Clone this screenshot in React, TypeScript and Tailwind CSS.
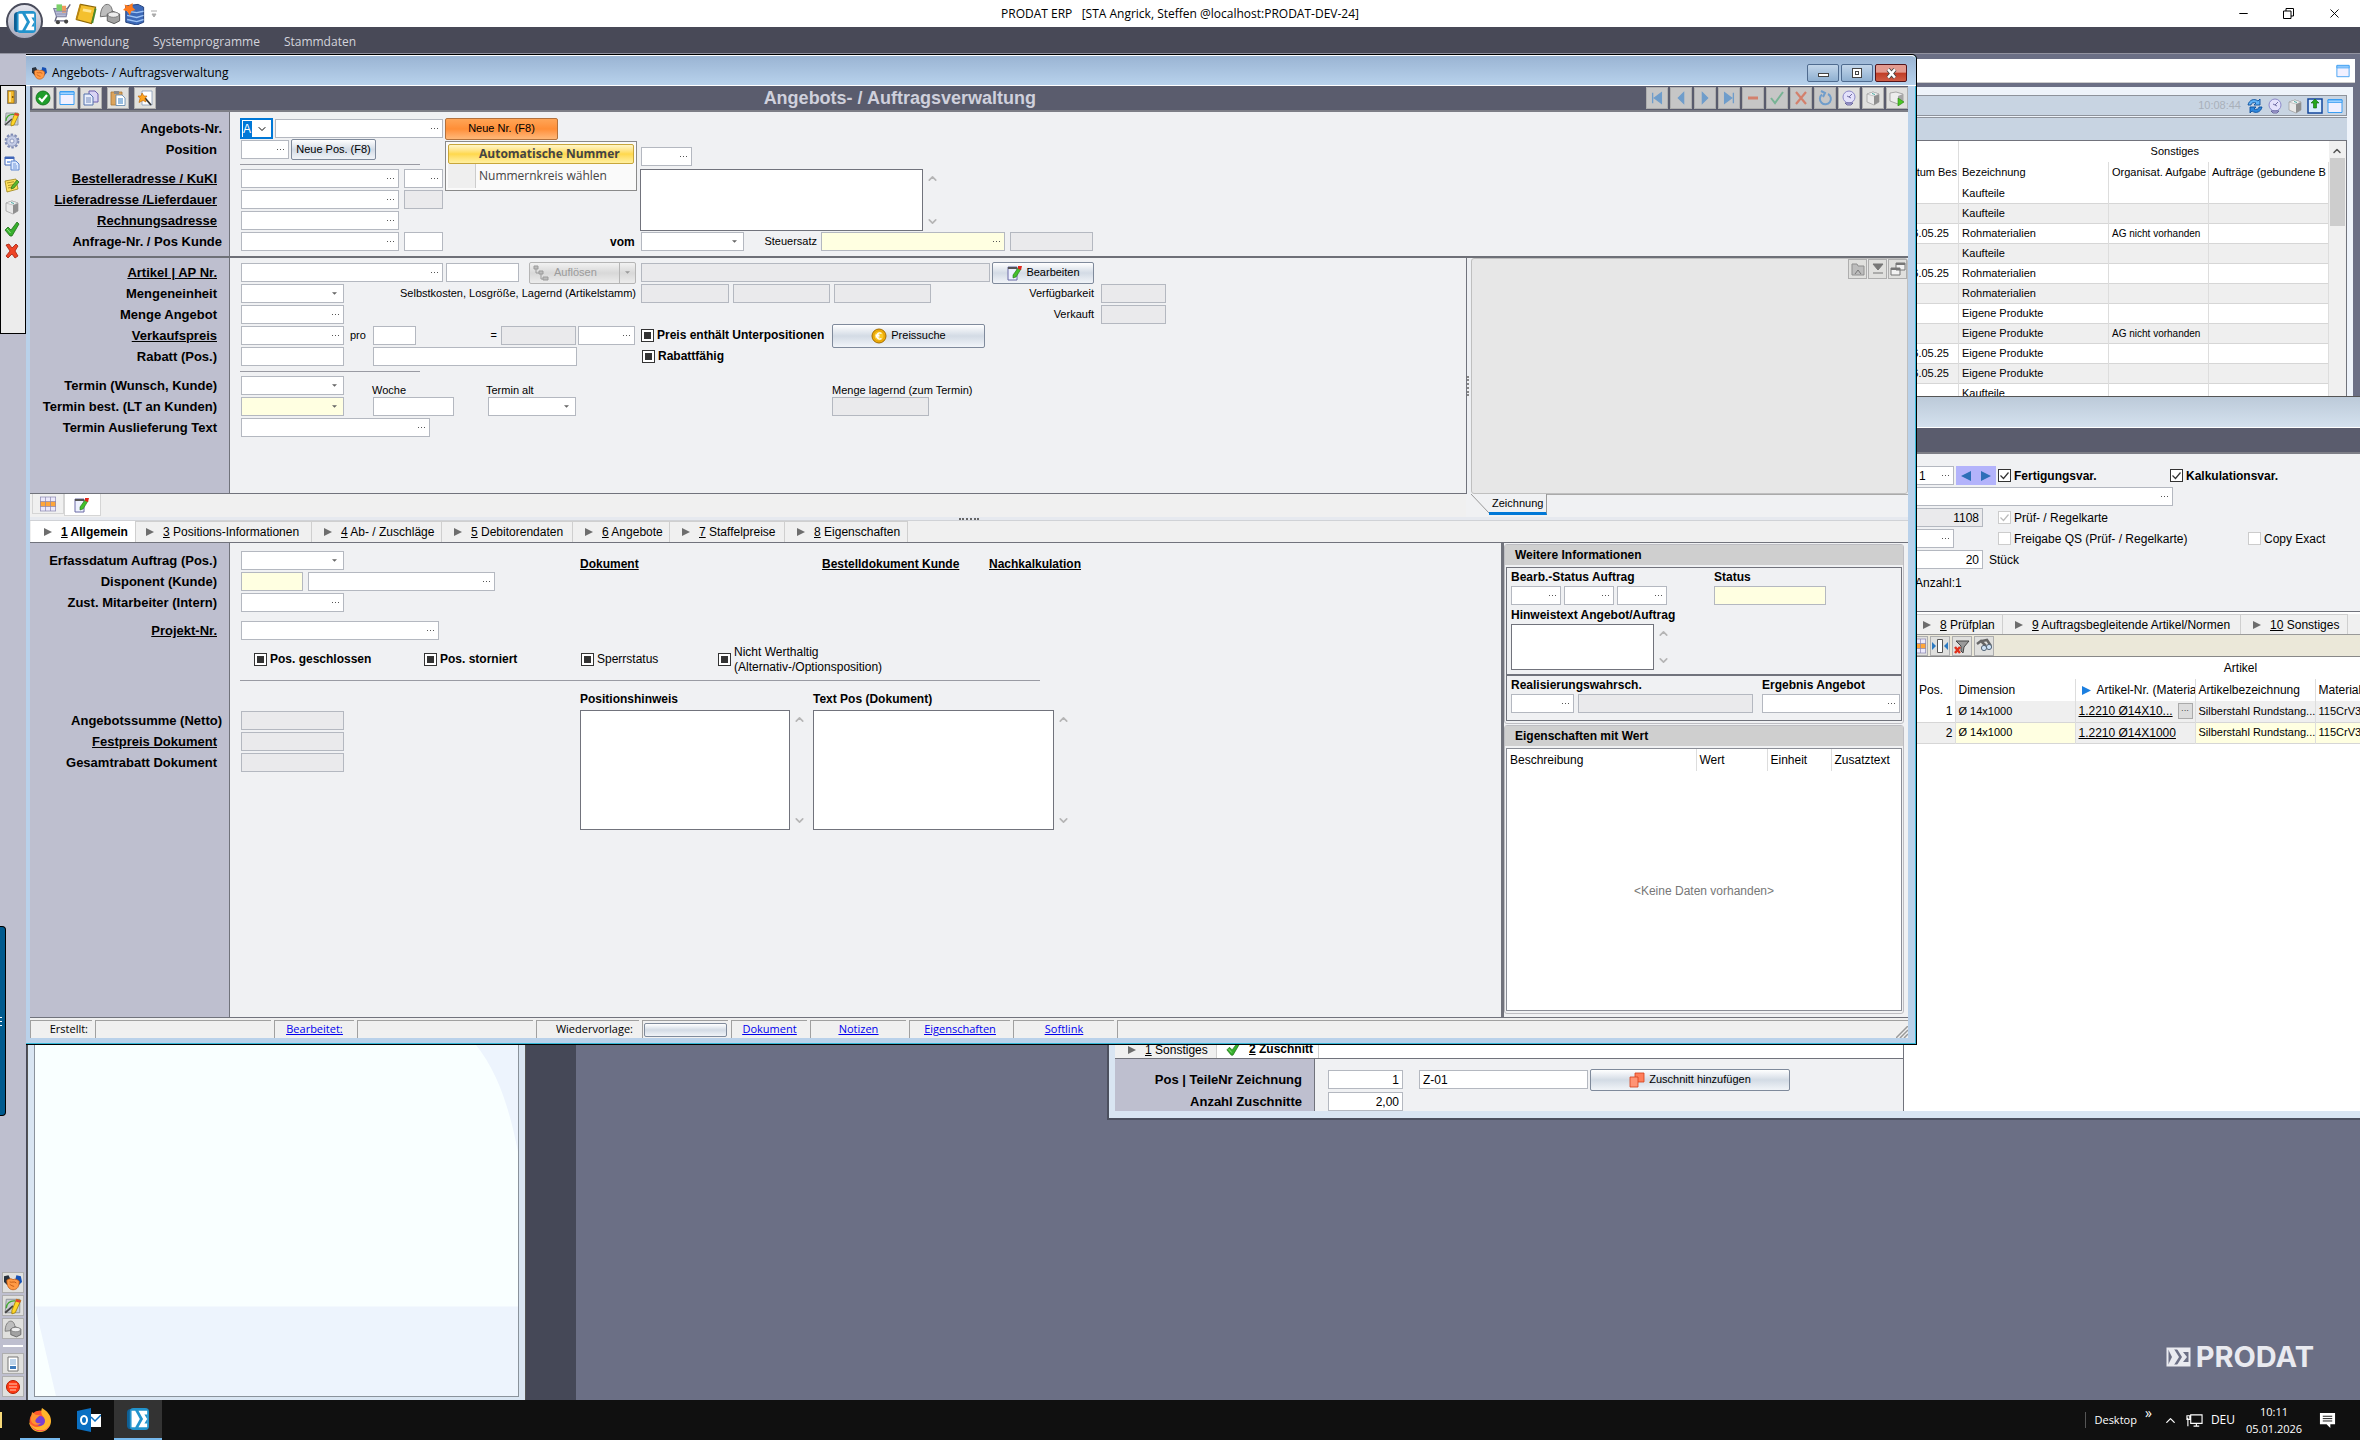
import React from 'react';
import clsx from 'clsx';
import { ChevronDown, ChevronUp, Minus, X } from 'lucide-react';

type Kids = { children?: React.ReactNode; className?: string };

/* ---------- icons ---------- */

const Svg: React.FC<Kids & { box?: string }> = ({ children, className = 'size-4', box = '0 0 16 16' }) => (
  <svg viewBox={box} className={clsx('shrink-0', className)} fill="none" aria-hidden="true">
    {children}
  </svg>
);

const DoorIcon = () => (
  <Svg>
    <path d="M3 1h9l1 1v12l-1 1H3z" fill="#8d8d8d" />
    <path d="M4 2h6v12H4z" fill="#f2b92c" stroke="#a87407" strokeWidth=".7" />
    <path d="M5 3h2v10H5z" fill="#ffe08a" />
    <circle cx="8.7" cy="8" r=".9" fill="#7c5200" />
  </Svg>
);

const DraftIcon = ({ className }: { className?: string }) => (
  <Svg className={className}>
    <path d="M2 2h12v12H1z" fill="#c9cdd0" stroke="#8a8f94" strokeWidth=".8" />
    <path d="M2 10C2 6 5 3 10 3.500" stroke="#43a832" strokeWidth="1.2" />
    <path d="M1 14l7-6" stroke="#444" strokeWidth="1.600" />
    <path d="M11 2l4 1-5 11-3 1 0-3z" fill="#ffd629" stroke="#9a7a00" strokeWidth=".7" />
    <path d="M11 2l4 1-.9 2-3.900-1z" fill="#e04431" />
  </Svg>
);

const GearIcon = () => (
  <Svg>
    <circle cx="8" cy="8" r="6.4" stroke="#7f8bb5" strokeWidth="2" strokeDasharray="2.5 1.5" />
    <circle cx="8" cy="8" r="5.3" fill="#c5cde6" stroke="#7f8bb5" strokeWidth=".8" />
    <circle cx="8" cy="8" r="2" fill="#f2f3f8" stroke="#7f8bb5" strokeWidth=".8" />
  </Svg>
);

const FormsIcon = () => (
  <Svg>
    <path d="M1 2h9v8H1z" fill="#fff" stroke="#4066b8" />
    <path d="M1 2h9v2H1z" fill="#4066b8" />
    <path d="M3 6h3v2H3z" fill="#8fb0ea" />
    <path d="M7 6h5l3 3v6H7z" fill="#dbe9ff" stroke="#5b84cf" />
    <path d="M9 9h3M9 11h4M9 13h4" stroke="#5b84cf" strokeWidth=".8" />
  </Svg>
);

const NoteIcon = () => (
  <Svg>
    <path d="M1 4l11-2 2 10-11 3z" fill="#ffe05b" stroke="#9b8317" strokeWidth=".8" />
    <path d="M3 6l7-1.3M4 8.500l6-1M4 11l4-1" stroke="#9b8317" strokeWidth=".8" />
    <path d="M13 3l2 2-5 6-3 1 1-3z" fill="#59b82f" stroke="#2f6b14" strokeWidth=".7" />
  </Svg>
);

const BoxIcon = ({ className }: { className?: string }) => (
  <Svg className={className}>
    <path d="M2 4l6-2 6 2v8l-5 3-7-3z" fill="#e9e9e9" stroke="#9a9a9a" strokeWidth=".7" />
    <path d="M9 6l5-2v8l-5 3z" fill="#8f8f8f" />
    <path d="M2 4l7 2 5-2-6-2z" fill="#f8f8f8" stroke="#a5a5a5" strokeWidth=".6" />
    <path d="M7 3.500l3 1" stroke="#45a7a0" />
  </Svg>
);

const TickIcon = ({ className }: { className?: string }) => (
  <Svg className={className}>
    <path d="M1 9l3-3 3 3 6-8 2 2-7 12H6z" fill="#36b02c" stroke="#226d1b" strokeWidth=".8" />
    <path d="M3 8l3.500 4" stroke="#9be08c" />
  </Svg>
);

const CrossIcon = () => (
  <Svg>
    <path d="M2 2l3-1 3 4 4-4 2 2-3 5 3 5-3 2-3-4-4 4-2-2 4-5z" fill="#ee4426" stroke="#a3200c" strokeWidth=".8" />
  </Svg>
);

const HandshakeIcon = ({ className }: { className?: string }) => (
  <Svg className={className}>
    <path d="M0 2l4-1 2 4-3 5-3-3z" fill="#27313d" />
    <path d="M11 1l4 1 1 5-3 3-3-5z" fill="#1550b5" />
    <path d="M2.500 5.500c2-1.500 4.500-1.500 5.500-.5 2-1 4 0 5.500 1.500C13.500 11 12 14 8 14S2.500 10 2.500 5.500z" fill="#ff9a45" stroke="#c35a10" strokeWidth=".7" />
    <path d="M5 7c2 1 4-1 6 1M5 9c1 1 3 2 4 2" stroke="#b64d0a" strokeWidth=".7" />
  </Svg>
);

const SolidsIcon = ({ className }: { className?: string }) => (
  <Svg className={className}>
    <path d="M1 10C1 5 3 1 6 1s4 4 4 8z" fill="#bdbdbd" stroke="#6e6e6e" strokeWidth=".7" />
    <path d="M6 8l4-2 5 2v5l-4 2-5-2z" fill="#a2a2a2" stroke="#5d5d5d" strokeWidth=".7" />
    <ellipse cx="10.500" cy="8.500" rx="4" ry="1.900" fill="#eee" stroke="#777" strokeWidth=".6" />
  </Svg>
);

const CartIcon = () => (
  <Svg className="size-[22px]">
    <path d="M2 4h10l-1 6H4z" fill="#b9bdd6" stroke="#7d7fa0" strokeWidth=".8" />
    <path d="M4 1h4v5H4z" fill="#7bd06a" />
    <path d="M8 2h3v5H8z" fill="#ef9a5c" />
    <path d="M3 6h9M4 8h8" stroke="#8d90b5" strokeWidth=".7" />
    <path d="M12 4l2-3M4 10l-1 3h9" stroke="#66677e" />
    <circle cx="5" cy="14" r="1.500" fill="#444" />
    <circle cx="11" cy="13.500" r="1.500" fill="#444" />
  </Svg>
);

const BookIcon = () => (
  <Svg className="size-[22px]">
    <path d="M4 1l11 2-3 12-11-3z" fill="#f4c02d" stroke="#8d6706" strokeWidth=".8" />
    <path d="M6 4l6 1-.4 2L5.500 6z" fill="#ffe58e" />
    <path d="M15 4l-2.500 10.500" stroke="#4c8a2c" strokeWidth="1.400" />
    <path d="M1 12l3-11" stroke="#b88410" strokeWidth="1.300" />
  </Svg>
);

const RackIcon = () => (
  <Svg className="size-[22px]">
    <path d="M2 2l9-1 4 2v11l-5 2-8-2z" fill="#3c69b8" stroke="#23407a" strokeWidth=".7" />
    <path d="M3 6l7 1 5-1M3 9l7 1.500 5-1.500M3 12l7 1.500 5-1.500" stroke="#9fc4f5" />
    <path d="M1 1l3 1 3-2 0 3 2 2-3 1-1 3-2-3-3-1 2-2z" fill="#ff7a1c" />
  </Svg>
);

const ProdatMark = ({ className }: { className?: string }) => (
  <Svg className={className} box="0 0 24 24">
    <rect y="1" width="20" height="22" rx="4" fill="#0f5f94" />
    <rect x="3" width="21" height="24" rx="4" fill="#2293cc" />
    <path d="M5 3h4l5 9-5 9H5z" fill="#fff" />
    <path d="M12.500 3H22v18h-9.500l5-9z" fill="#fff" />
    <path d="M22 7h-3l3 5-3 5h3" fill="#2293cc" />
  </Svg>
);

const OkIcon = () => (
  <Svg>
    <circle cx="8" cy="8" r="7" fill="#1f9d2b" stroke="#0d6a18" strokeWidth=".8" />
    <path d="M4 8l3 3 5-6" stroke="#fff" strokeWidth="2.200" />
  </Svg>
);

const WindowIcon = ({ className }: { className?: string }) => (
  <Svg className={className}>
    <path d="M1 1.500h14v13H1z" fill="#f1f0ff" stroke="#3a9df2" />
    <path d="M1 2h14v2.500H1z" fill="#9fd2ff" stroke="#3a9df2" strokeWidth=".8" />
  </Svg>
);

const CopyIcon = () => (
  <Svg>
    <path d="M6 1h6l3 3v8H6z" fill="#d9d4f3" stroke="#6a5fae" />
    <path d="M1 4h6l3 3v8H1z" fill="#e9effc" stroke="#5472ad" />
    <path d="M3 8h5M3 10h5M3 12h5" stroke="#5472ad" strokeWidth=".8" />
  </Svg>
);

const PasteIcon = () => (
  <Svg>
    <path d="M1 2h11v13H1z" fill="#dca45c" stroke="#a97634" strokeWidth=".8" />
    <path d="M4 1h5v3H4z" fill="#8b8b8b" />
    <path d="M6 5h6l3 3v7.500H6z" fill="#fff" stroke="#5b85ad" strokeWidth=".8" />
    <path d="M8 9h5M8 11h5M8 13h5" stroke="#2f7bc2" />
  </Svg>
);

const WizardIcon = () => (
  <Svg>
    <path d="M5 1h10v14H5z" fill="#fff" stroke="#8699b8" strokeWidth=".8" />
    <path d="M8 8l6 7" stroke="#333" strokeWidth="1.800" />
    <path d="M5 3l2 3 3 0-2 2.500 1 3.500-3-1.500-4 2 1-4-2-2.500h3z" fill="#ffa41f" stroke="#b95f00" strokeWidth=".6" />
  </Svg>
);

const DishIcon = () => (
  <Svg>
    <circle cx="8" cy="7" r="6" fill="#e4e2fb" stroke="#8c89c9" />
    <path d="M8 7l3-3M6 6l4 2M4 13h8l-2 2H6z" stroke="#55538f" fill="#b8b5e2" strokeWidth=".8" />
  </Svg>
);

const PrintGoIcon = () => (
  <Svg>
    <path d="M1 3l6-1 7 2v8l-5 2-8-3z" fill="#ededed" stroke="#8d8d8d" strokeWidth=".7" />
    <path d="M9 6l5-2v8l-5 2z" fill="#a5a5a5" />
    <path d="M9 8l6 4-6 4z" fill="#4bc725" stroke="#2a7f11" strokeWidth=".6" />
  </Svg>
);

const EditIcon = () => (
  <Svg>
    <path d="M2 2h9v13H2z" fill="#eef1ff" stroke="#6a6aa5" />
    <path d="M2 2h9v2H2z" fill="#555" />
    <path d="M12 3l3 1-5 8-3 1 0-3z" fill="#44c02b" stroke="#23701a" strokeWidth=".6" />
    <path d="M12 1l4 0-1 4-3-1z" fill="#e0261b" />
  </Svg>
);

const GridIcon = () => (
  <Svg>
    <path d="M0 1h16v14H0z" fill="#ece9fb" />
    <path d="M0 5.500h16v5H0z" fill="#ffa63a" />
    <path d="M0 1h16M0 5.500h16M0 10.500h16M0 15h16M.5 1v14M5.500 1v14M10.500 1v14M15.500 1v14" stroke="#8a86b0" strokeWidth=".7" />
  </Svg>
);

const CoinIcon = () => (
  <Svg>
    <circle cx="8" cy="8" r="7" fill="#f0ae08" stroke="#a56e00" />
    <circle cx="8" cy="8" r="5" fill="#fbc926" stroke="#d99405" strokeWidth=".6" />
    <path d="M10.500 5.500A3 3 0 1 0 10.500 10.500M4.500 7.300h4M4.500 8.900h4" stroke="#fff" strokeWidth="1.400" />
  </Svg>
);

const TreeIcon = () => (
  <Svg>
    <path d="M1 1h4v3H1zM6 6h4v3H6zM10 12h5v3h-5z" fill="#bcbcbc" stroke="#9b9b9b" />
    <path d="M3 4v4h3M8 9v5h2" stroke="#9b9b9b" />
  </Svg>
);

const SheetsIcon = () => (
  <Svg>
    <path d="M6 1h9v9H6z" fill="#ff7e5a" stroke="#d4401b" strokeWidth=".8" />
    <path d="M1 5h8v10H1z" fill="#ff9475" stroke="#d4401b" strokeWidth=".8" />
  </Svg>
);

const RefreshIcon = () => (
  <Svg>
    <path d="M1 7c1-5 6-7 10-4l2-2v6H7l2-2C7 4 4 5 4 7z" fill="#5eb1f5" stroke="#0c4f9c" strokeWidth=".9" />
    <path d="M15 9c-1 5-6 7-10 4l-2 2V9h6l-2 2c2 1 5 0 5-2z" fill="#2d86dc" stroke="#0c4f9c" strokeWidth=".9" />
  </Svg>
);

const ExportIcon = () => (
  <Svg>
    <path d="M1 1h14v14H1z" fill="#d9ecff" stroke="#13459c" strokeWidth="1.500" />
    <path d="M8 1l4 4H9.500v5h-3V5H4z" fill="#25a81c" stroke="#0e6408" strokeWidth=".6" />
  </Svg>
);

const PlayMark = ({ className = 'size-2' }: { className?: string }) => (
  <Svg className={className} box="0 0 8 8">
    <path d="M0 0l8 4-8 4z" fill="currentColor" />
  </Svg>
);

/* ---------- form controls ---------- */

const tones = {
  plain: 'bg-white',
  off: 'bg-[#eaeaec]',
  due: 'bg-[#ffffe1]',
};

interface FieldProps {
  id?: string;
  name: string;
  className: string;
  tone?: keyof typeof tones;
  dots?: boolean;
  value?: string;
  right?: boolean;
}

const Field: React.FC<FieldProps> = ({ id, name, className, tone = 'plain', dots, value = '', right }) => (
  <span className={clsx('relative flex h-[19px] shrink-0', className)}>
    <input
      id={id}
      aria-label={name}
      defaultValue={value}
      readOnly={tone === 'off'}
      className={clsx('h-full w-full min-w-0 border border-[#b4b8c0] px-[3px] text-[12px] outline-none', tones[tone], right && 'text-right', right && dots && 'pr-7')}
    />
    {dots && (
      <button aria-label={`${name} auswählen`} className="absolute inset-y-0 right-[5px] flex items-center gap-[2px]">
        <i className="size-px bg-[#555]" />
        <i className="size-px bg-[#555]" />
        <i className="size-px bg-[#555]" />
      </button>
    )}
  </span>
);

const Drop: React.FC<FieldProps> = ({ id, name, className, tone = 'plain' }) => (
  <span className={clsx('relative flex h-[19px] shrink-0', className)}>
    <select id={id} aria-label={name} className={clsx('h-full w-full appearance-none border border-[#b4b8c0] text-[12px] outline-none', tones[tone])}>
      <option></option>
    </select>
    <Svg className="pointer-events-none absolute right-[7px] top-[8px] h-[3px] w-[5px]" box="0 0 6 3">
      <path d="M0 0h6L3 3z" fill="#666" />
    </Svg>
  </span>
);

const TriBox: React.FC<Kids & { bold?: boolean }> = ({ children, className, bold }) => (
  <label className={clsx('flex items-center gap-[3px] whitespace-nowrap text-[12px] leading-[15px]', bold && 'font-bold', className)}>
    <input
      type="checkbox"
      className="grid size-[13px] shrink-0 appearance-none place-content-center border border-[#333] bg-white before:size-[7px] before:bg-[#333] before:content-['']"
    />
    {children}
  </label>
);

const CheckBox: React.FC<Kids & { on?: boolean; off?: boolean; bold?: boolean }> = ({ children, className, on, off, bold }) => (
  <label className={clsx('flex items-center gap-[3px] whitespace-nowrap text-[12px]', bold && 'font-bold', className)}>
    <span className="relative size-[13px]">
      <input
        type="checkbox"
        defaultChecked={on}
        disabled={off}
        className="block size-[13px] appearance-none border border-[#333] bg-white disabled:border-[#ccc]"
      />
      {on && (
        <Svg className={clsx('pointer-events-none absolute inset-0 size-[13px]', off ? 'text-[#bbb]' : 'text-[#333]')} box="0 0 13 13">
          <path d="M2.500 6.500l3 3 5-6" stroke="currentColor" strokeWidth="1.200" />
        </Svg>
      )}
    </span>
    {children}
  </label>
);

const Memo: React.FC<{ name: string; className: string }> = ({ name, className }) => (
  <span className="flex">
    <textarea aria-label={name} className={clsx('resize-none border border-[#71737c] bg-white outline-none', className)} />
    <span className="flex w-[18px] flex-col items-center justify-between py-[3px] text-[#b5b5b5]">
      <ChevronUp size={13} strokeWidth={3} />
      <ChevronDown size={13} strokeWidth={3} />
    </span>
  </span>
);

const Btn: React.FC<Kids> = ({ children, className }) => (
  <button
    className={clsx(
      'flex shrink-0 items-center justify-center gap-1 rounded-[2px] border border-[#7f8a9b] bg-linear-to-b from-white from-0% via-[#d3dbe5] via-50% to-[#f1f4f8] text-[11px] whitespace-nowrap',
      className,
    )}
  >
    {children}
  </button>
);

const ToolBtn: React.FC<Kids & { name: string; off?: boolean }> = ({ children, className = 'size-[22px]', name, off }) => (
  <button
    aria-label={name}
    className={clsx('flex shrink-0 items-center justify-center border border-[#aeaeae]', off ? 'bg-[#c6c6c6]' : 'bg-[#e0e0de]', className)}
  >
    {children}
  </button>
);

interface LabelDef {
  text: string;
  to: string;
  link?: boolean;
  wide?: boolean;
  space?: string;
}

// left caption column; every caption is as high as the field row next to it
const Captions: React.FC<{ items: LabelDef[]; className?: string }> = ({ items, className }) => (
  <div className={clsx('flex w-[200px] shrink-0 flex-col gap-[2px] border-r border-[#71737c] bg-[#bebfcf] text-right text-[13px] font-bold', className)}>
    {items.map((l) => (
      <label key={l.to} htmlFor={l.to} className={clsx('h-[19px] leading-[19px] whitespace-nowrap', l.wide ? 'pr-[7px]' : 'pr-3', l.link && 'underline', l.space)}>
        {l.text}
      </label>
    ))}
  </div>
);

const Row: React.FC<Kids> = ({ children, className }) => <div className={clsx('flex h-[19px] items-center', className)}>{children}</div>;

const Rule = ({ className }: { className: string }) => (
  <div className="flex h-[6px] items-center">
    <hr className={clsx('border-t border-[#9a9ba3]', className)} />
  </div>
);

const Tab: React.FC<{ num: string; text: string; className: string; active?: boolean; icon?: React.ReactNode }> = ({ num, text, className, active, icon }) => (
  <button
    role="tab"
    aria-selected={!!active}
    className={clsx('flex shrink-0 items-center gap-[9px] border-r border-[#cfcfcf] text-[12px] whitespace-nowrap', active ? 'bg-white font-bold' : 'border-t', className)}
  >
    {icon ?? <PlayMark className="size-2 text-[#6d6d6d]" />}
    <span>
      <u>{num}</u> {text}
    </span>
  </button>
);

/* ---------- main window ---------- */

const NAV = [
  { name: 'Erster', d: 'M3 2v12M13 2L5 8l8 6z' },
  { name: 'Zurück', d: 'M11 2L5 8l6 6z' },
  { name: 'Weiter', d: 'M5 2l6 6-6 6z' },
  { name: 'Letzter', d: 'M13 2v12M3 2l8 6-8 6z' },
];

const Toolbar = () => (
  <div className="flex h-[26px] items-center border-b-2 border-[#7d7e86] bg-[#5a5c6d] pl-[2px]">
    <div className="flex w-[39%] items-center gap-[2px]">
      <ToolBtn name="OK"><OkIcon /></ToolBtn>
      <ToolBtn name="Fenster"><WindowIcon /></ToolBtn>
      <ToolBtn name="Kopieren"><CopyIcon /></ToolBtn>
      <ToolBtn name="Einfügen" className="ml-[3px] size-[22px]"><PasteIcon /></ToolBtn>
      <ToolBtn name="Assistent" className="ml-[3px] size-[22px]"><WizardIcon /></ToolBtn>
    </div>
    <h1 className="text-[18px] leading-6 font-bold text-[#cfd0dc]">Angebots- / Auftragsverwaltung</h1>
    <div className="flex flex-1 items-center justify-end gap-[2px]">
      {NAV.map((n) => (
        <ToolBtn key={n.name} name={n.name} off>
          <Svg className="size-[14px]"><path d={n.d} fill="#6f9dcb" stroke="#6f9dcb" strokeWidth="1.500" /></Svg>
        </ToolBtn>
      ))}
      <ToolBtn name="Löschen" off><Svg><path d="M3 8h10" stroke="#d3806c" strokeWidth="3" /></Svg></ToolBtn>
      <ToolBtn name="Speichern" off><Svg><path d="M2 8l4 5 8-11" stroke="#77b394" strokeWidth="2" /></Svg></ToolBtn>
      <ToolBtn name="Verwerfen" off><Svg><path d="M3 2l10 12M13 2L3 14" stroke="#d3806c" strokeWidth="2.200" /></Svg></ToolBtn>
      <ToolBtn name="Aktualisieren" off><Svg><path d="M11 4a5.500 5.500 0 1 1-6 .5M4 1l4 2-2 4" stroke="#6f9dcb" strokeWidth="2" /></Svg></ToolBtn>
      <ToolBtn name="Verfolgen"><DishIcon /></ToolBtn>
      <ToolBtn name="Drucken"><BoxIcon /></ToolBtn>
      <ToolBtn name="Direktdruck"><PrintGoIcon /></ToolBtn>
    </div>
  </div>
);

const HeadSection = () => (
  <section className="flex h-[146px] border-b-2 border-[#6e7077]">
    <Captions
      className="pt-[7px]"
      items={[
        { text: 'Angebots-Nr.', to: 'angnr', wide: true },
        { text: 'Position', to: 'pos' },
        { text: 'Bestelleradresse / KuKI', to: 'best', link: true, space: 'mt-2' },
        { text: 'Lieferadresse /Lieferdauer', to: 'lief', link: true },
        { text: 'Rechnungsadresse', to: 'rech', link: true },
        { text: 'Anfrage-Nr. / Pos Kunde', to: 'anfr', wide: true },
      ]}
    />
    <div className="flex w-[372px] flex-col gap-[2px] pt-[7px] pl-[10px]">
      <Row className="relative gap-[2px]">
        <span className="relative flex h-[21px] w-[33px] items-center border-2 border-[#0078d7] bg-white pl-px">
          <select id="angnr" aria-label="Nummernkreis" className="w-[9px] appearance-none bg-[#0078d7] text-[12px] leading-4 text-white">
            <option>A</option>
          </select>
          <ChevronDown size={12} className="absolute right-[3px]" />
        </span>
        <Field name="Angebotsnummer" className="w-[168px]" dots />
        <button className="h-[22px] w-[113px] rounded-[2px] border border-[#b3713c] bg-linear-to-b from-[#ffa556] via-[#ff8e36] to-[#ffb878] text-[11px]">Neue Nr. (F8)</button>
        <ul className="absolute top-[22px] left-[205px] z-10 w-[192px] border border-[#8a8a8a] bg-[#fafafa] p-[2px] font-['Open_Sans',sans-serif] text-[12px] leading-[18px] text-[#444]">
          <li>
            <button className="h-5 w-full rounded-[2px] border border-[#c8a63a] bg-linear-to-b from-[#fff6c9] via-[#ffd84b] to-[#fff0a0] pl-[30px] text-left font-bold">Automatische Nummer</button>
          </li>
          <li className="flex h-6 items-center">
            <span className="h-full w-[28px] border-r border-[#ccc] bg-[#efefef]" />
            <button className="pl-[3px]">Nummernkreis wählen</button>
          </li>
        </ul>
      </Row>
      <Row className="gap-[2px] pl-px">
        <Field id="pos" name="Position" className="w-12" dots />
        <Btn className="h-[21px] w-[85px]">Neue Pos. (F8)</Btn>
      </Row>
      <Rule className="w-[180px]" />
      <Row className="gap-[5px] pl-px">
        <Field id="best" name="Bestelleradresse" className="w-[158px]" dots />
        <Field name="KuKI" className="w-[39px]" dots />
      </Row>
      <Row className="gap-[5px] pl-px">
        <Field id="lief" name="Lieferadresse" className="w-[158px]" dots />
        <Field name="Lieferdauer" className="w-[39px]" tone="off" />
      </Row>
      <Row className="pl-px">
        <Field id="rech" name="Rechnungsadresse" className="w-[158px]" dots />
      </Row>
      <Row className="gap-[5px] pl-px">
        <Field id="anfr" name="Anfrage-Nr." className="w-[158px]" dots />
        <Field name="Pos Kunde" className="w-[39px]" />
      </Row>
    </div>
    <div className="flex flex-col pt-[35px] pl-2">
      <Row className="pl-[31px]"><Field name="Adresszusatz" className="w-[51px]" dots /></Row>
      <div className="mt-[3px] pl-[30px]"><Memo name="Adresse" className="h-[62px] w-[283px]" /></div>
      <Row className="mt-px">
        <label htmlFor="vom" className="w-[31px] text-[12px] font-bold">vom</label>
        <Drop id="vom" name="vom" className="w-[103px]" />
        <label htmlFor="steuer" className="w-[77px] pr-1 text-right text-[11px]">Steuersatz</label>
        <Field id="steuer" name="Steuersatz" className="w-[184px]" tone="due" dots />
        <Field name="Steuersatz Text" className="ml-[5px] w-[83px]" tone="off" />
      </Row>
    </div>
  </section>
);

const ArticleSection = () => (
  <section className="flex flex-1 border-b border-[#71737c]">
    <Captions
      className="pt-[5px]"
      items={[
        { text: 'Artikel | AP Nr.', to: 'art', link: true },
        { text: 'Mengeneinheit', to: 'me' },
        { text: 'Menge Angebot', to: 'menge' },
        { text: 'Verkaufspreis', to: 'vk', link: true },
        { text: 'Rabatt (Pos.)', to: 'rab' },
        { text: 'Termin (Wunsch, Kunde)', to: 'tw', space: 'mt-2' },
        { text: 'Termin best. (LT an Kunden)', to: 'tb' },
        { text: 'Termin Auslieferung Text', to: 'ta' },
      ]}
    />
    <div className="flex flex-col gap-[2px] pt-[5px] pl-[11px] text-[11px]">
      <Row>
        <Field id="art" name="Artikel" className="w-[202px]" dots />
        <Field name="AP Nr." className="ml-[3px] w-[73px]" />
        <span className="ml-[10px] flex h-[22px] w-[107px] rounded-[2px] border border-[#b5b5b5] bg-linear-to-b from-[#f2f2f2] via-[#d8d8d8] to-[#ececec] text-[11px] text-[#9b9b9b]">
          <button className="flex flex-1 items-center gap-[5px] pl-[3px]"><TreeIcon />Auflösen</button>
          <button aria-label="Auflösen Optionen" className="flex w-4 items-center justify-center border-l border-[#b5b5b5]">
            <Svg className="h-[3px] w-[5px]" box="0 0 6 3"><path d="M0 0h6L3 3z" fill="#999" /></Svg>
          </button>
        </span>
        <Field name="Artikelbezeichnung" className="ml-[5px] w-[349px]" tone="off" />
        <Btn className="ml-[2px] h-[22px] w-[102px]"><EditIcon />Bearbeiten</Btn>
      </Row>
      <Row>
        <Drop id="me" name="Mengeneinheit" className="w-[103px]" />
        <span className="w-[297px] pr-[5px] text-right whitespace-nowrap">Selbstkosten, Losgröße, Lagernd (Artikelstamm)</span>
        <Field name="Selbstkosten" className="w-[88px]" tone="off" />
        <Field name="Losgröße" className="ml-1 w-[97px]" tone="off" />
        <Field name="Lagernd" className="ml-1 w-[97px]" tone="off" />
        <label htmlFor="verf" className="w-[170px] pr-[7px] text-right">Verfügbarkeit</label>
        <Field id="verf" name="Verfügbarkeit" className="w-[65px]" tone="off" />
      </Row>
      <Row>
        <Field id="menge" name="Menge Angebot" className="w-[103px]" dots />
        <label htmlFor="verk" className="w-[757px] pr-[7px] text-right">Verkauft</label>
        <Field id="verk" name="Verkauft" className="w-[65px]" tone="off" />
      </Row>
      <Row>
        <Field id="vk" name="Verkaufspreis" className="w-[103px]" dots />
        <label htmlFor="pro" className="w-[29px] pl-[6px]">pro</label>
        <Field id="pro" name="pro" className="w-[43px]" />
        <span className="w-[85px] pr-1 text-right">=</span>
        <Field name="Summe" className="w-[75px]" tone="off" />
        <Field name="Währung" className="ml-[2px] w-[57px]" dots />
        <TriBox bold className="ml-[6px] w-[191px]">Preis enthält Unterpositionen</TriBox>
        <Btn className="h-6 w-[153px]"><CoinIcon />Preissuche</Btn>
      </Row>
      <Row>
        <Field id="rab" name="Rabatt" className="w-[103px]" />
        <Field name="Rabatt Text" className="ml-[29px] w-[204px]" />
        <TriBox bold className="ml-[65px]">Rabattfähig</TriBox>
      </Row>
      <Rule className="-ml-px w-[180px]" />
      <Row>
        <Drop id="tw" name="Termin Wunsch" className="w-[103px]" />
        <label htmlFor="woche" className="ml-7 w-[114px] pt-[10px]">Woche</label>
        <label htmlFor="talt" className="w-[346px] pt-[10px]">Termin alt</label>
        <label htmlFor="mlag" className="pt-[10px]">Menge lagernd (zum Termin)</label>
      </Row>
      <Row>
        <Drop id="tb" name="Termin bestätigt" className="w-[103px]" tone="due" />
        <Field id="woche" name="Woche" className="ml-[29px] w-[81px]" />
        <Drop id="talt" name="Termin alt" className="ml-[34px] w-[88px]" />
        <Field id="mlag" name="Menge lagernd" className="ml-[256px] w-[97px]" tone="off" />
      </Row>
      <Row>
        <Field id="ta" name="Termin Auslieferung Text" className="w-[189px]" dots />
      </Row>
    </div>
  </section>
);

const DrawingPane = () => (
  <div className="flex w-[442px] shrink-0 flex-col">
    <div className="flex flex-1">
      <div className="flex w-[5px] items-center border-l border-[#71737c] bg-[#eef0f3] pt-5">
        <span className="h-5 w-px border-l-2 border-dotted border-[#888]" />
      </div>
      <div className="flex flex-1 items-start justify-end gap-px rounded-[3px] border border-[#bfbfbf] bg-[#e7e7e7]">
        <ToolBtn name="Ordner" className="h-5 w-[19px]"><Svg><path d="M2 3h5l1 2h6v9H2z" fill="#bdbdbd" stroke="#8f8f8f" /><path d="M5 13l3-4 3 4" stroke="#777" /></Svg></ToolBtn>
        <ToolBtn name="Ablegen" className="h-5 w-[19px]"><Svg><path d="M3 3h10L8 9zM3 12h10" fill="#777" stroke="#777" /></Svg></ToolBtn>
        <ToolBtn name="Lösen" className="h-5 w-[19px]"><Svg><path d="M6 2h9v7H6zM1 7h9v7H1z" fill="#f2f2f2" stroke="#777" /><path d="M6 3h9M1 8h9" stroke="#777" strokeWidth="2" /></Svg></ToolBtn>
      </div>
    </div>
    <div className="flex h-[23px] pl-[5px]">
      <Svg className="h-[19px] w-[18px]" box="0 0 18 19"><path d="M0 0l18 19" stroke="#999" /></Svg>
      <button role="tab" className="h-[21px] border-r border-b-[3px] border-r-[#999] border-b-[#0078d7] px-[3px] pt-px text-[11px] leading-[17px]">Zeichnung</button>
      <div className="flex-1 border-t border-[#aaa]" />
    </div>
  </div>
);

const InfoPane = () => (
  <aside className="flex w-[407px] shrink-0 flex-col border-l-[3px] border-[#71737c] pt-px pr-1 pb-[3px] text-[12px]">
    <div className="flex flex-col rounded-[3px] border border-[#bdbdc2]">
      <h2 className="h-5 bg-[#cfcfcf] pl-[10px] leading-5 font-bold">Weitere Informationen</h2>
      <div className="mx-px mt-[2px] h-[109px] border border-b-2 border-[#71737c] pl-1 font-bold">
        <div className="flex">
          <div className="w-[203px]">
            <label htmlFor="bstat" className="block h-[18px] leading-[19px]">Bearb.-Status Auftrag</label>
            <div className="flex gap-[3px]">
              <Field id="bstat" name="Status 1" className="w-[50px]" dots />
              <Field name="Status 2" className="w-[50px]" dots />
              <Field name="Status 3" className="w-[50px]" dots />
            </div>
          </div>
          <div>
            <label htmlFor="stat" className="block h-[18px] leading-[19px]">Status</label>
            <Field id="stat" name="Status" className="w-[112px]" tone="due" />
          </div>
        </div>
        <div className="h-[19px] leading-[21px]">Hinweistext Angebot/Auftrag</div>
        <Memo name="Hinweistext" className="h-[46px] w-[143px]" />
      </div>
      <div className="mx-px mb-[2px] flex h-[45px] border border-t-0 border-[#71737c] pl-1 font-bold">
        <div className="w-[251px]">
          <label htmlFor="real" className="block h-[18px] leading-[19px]">Realisierungswahrsch.</label>
          <div className="flex gap-1">
            <Field id="real" name="Realisierung" className="w-[63px]" dots />
            <Field name="Realisierung Text" className="w-[175px]" tone="off" />
          </div>
        </div>
        <div>
          <label htmlFor="erg" className="block h-[18px] leading-[19px]">Ergebnis Angebot</label>
          <Field id="erg" name="Ergebnis" className="w-[138px]" dots />
        </div>
      </div>
    </div>
    <div className="mt-px flex flex-1 flex-col rounded-[3px] border border-[#bdbdc2] pb-[2px]">
      <h2 className="h-5 bg-[#cfcfcf] pl-[10px] leading-5 font-bold">Eigenschaften mit Wert</h2>
      <div className="mx-px mt-[2px] flex flex-1 flex-col border border-[#8a8d96] bg-white">
        <table className="w-full table-fixed text-left">
          <colgroup>
            <col className="w-[189px]" />
            <col className="w-[71px]" />
            <col className="w-[64px]" />
            <col />
          </colgroup>
          <thead>
            <tr className="h-[22px]">
              {['Beschreibung', 'Wert', 'Einheit', 'Zusatztext'].map((t) => (
                <th key={t} className="border-r border-[#ddd] pl-[3px] font-normal last:border-r-0">{t}</th>
              ))}
            </tr>
          </thead>
        </table>
        <p className="flex flex-1 items-center justify-center text-[#777]">&lt;Keine Daten vorhanden&gt;</p>
      </div>
    </div>
  </aside>
);

const GeneralSection = () => (
  <section className="flex min-h-0 flex-1 border-b border-[#71737c]">
    <Captions
      className="pt-2"
      items={[
        { text: 'Erfassdatum Auftrag (Pos.)', to: 'erf' },
        { text: 'Disponent (Kunde)', to: 'disp' },
        { text: 'Zust. Mitarbeiter (Intern)', to: 'zust' },
        { text: 'Projekt-Nr.', to: 'proj', link: true, space: 'mt-[7px]' },
        { text: 'Angebotssumme (Netto)', to: 'sum', wide: true, space: 'mt-[69px]' },
        { text: 'Festpreis Dokument', to: 'fest', link: true },
        { text: 'Gesamtrabatt Dokument', to: 'ges' },
      ]}
    />
    <div className="flex min-w-0 flex-1 flex-col gap-[2px] pt-2 pl-[11px]">
      <Row className="text-[12px] font-bold">
        <Drop id="erf" name="Erfassdatum" className="w-[103px]" />
        <a href="#dokument" className="ml-[236px] w-[242px] pt-[6px] leading-4 underline">Dokument</a>
        <a href="#bestell" className="w-[167px] pt-[6px] leading-4 underline">Bestelldokument Kunde</a>
        <a href="#nachkalk" className="pt-[6px] leading-4 underline">Nachkalkulation</a>
      </Row>
      <Row className="gap-[5px]">
        <Field id="disp" name="Disponent" className="w-[62px]" tone="due" />
        <Field name="Disponent Name" className="w-[187px]" dots />
      </Row>
      <Row><Field id="zust" name="Mitarbeiter" className="w-[103px]" dots /></Row>
      <Row className="mt-[7px]"><Field id="proj" name="Projekt-Nr." className="w-[198px]" dots /></Row>
      <div className="flex h-[35px] items-center pl-[13px]">
        <TriBox bold className="w-[170px]">Pos. geschlossen</TriBox>
        <TriBox bold className="w-[157px]">Pos. storniert</TriBox>
        <TriBox className="w-[137px]">Sperrstatus</TriBox>
        <TriBox><span>Nicht Werthaltig<br />(Alternativ-/Optionsposition)</span></TriBox>
      </div>
      <hr className="mt-px -ml-px w-[800px] border-t border-[#9a9ba3]" />
      <div className="flex">
        <div className="flex w-[339px] flex-col gap-[2px] pt-7">
          <Field id="sum" name="Angebotssumme" className="w-[103px]" tone="off" />
          <Field id="fest" name="Festpreis" className="w-[103px]" tone="off" />
          <Field id="ges" name="Gesamtrabatt" className="w-[103px]" tone="off" />
        </div>
        <div className="w-[233px] pt-2 text-[12px] font-bold">
          <div className="h-[19px] leading-[17px]">Positionshinweis</div>
          <Memo name="Positionshinweis" className="h-[120px] w-[210px]" />
        </div>
        <div className="pt-2 text-[12px] font-bold">
          <div className="h-[19px] leading-[17px]">Text Pos (Dokument)</div>
          <Memo name="Text Pos" className="h-[120px] w-[241px]" />
        </div>
      </div>
    </div>
    <InfoPane />
  </section>
);

const StatusCell: React.FC<Kids> = ({ children, className }) => (
  <div className={clsx('flex h-[18px] shrink-0 items-center border-t border-l border-[#a0a0a0]', className)}>{children}</div>
);

const StatusBar = () => (
  <footer className="flex h-5 items-end gap-[3px] bg-[#f0f0f0] font-['Open_Sans',sans-serif] text-[11px] text-black">
    <StatusCell className="w-[62px] justify-end pr-1">Erstellt:</StatusCell>
    <StatusCell className="w-[176px]" />
    <StatusCell className="w-20 justify-center text-[#0000ee] underline"><a href="#bearbeitet">Bearbeitet:</a></StatusCell>
    <StatusCell className="w-[176px]" />
    <StatusCell className="w-[103px] justify-end pr-[6px]">Wiedervorlage:</StatusCell>
    <StatusCell className="w-[86px] px-px"><Btn className="h-[14px] w-full" /></StatusCell>
    <StatusCell className="w-[76px] justify-center text-[#0000ee] underline"><a href="#dok">Dokument</a></StatusCell>
    <StatusCell className="w-[96px] justify-center text-[#0000ee] underline"><a href="#notizen">Notizen</a></StatusCell>
    <StatusCell className="w-[101px] justify-center text-[#0000ee] underline"><a href="#eigenschaften">Eigenschaften</a></StatusCell>
    <StatusCell className="w-[101px] justify-center text-[#0000ee] underline"><a href="#softlink">Softlink</a></StatusCell>
    <StatusCell className="min-w-0 flex-1 items-end justify-end">
      <Svg className="size-3" box="0 0 12 12"><path d="M0 12L12 0M4 12l8-8M8 12l4-4" stroke="#999" strokeWidth="1.500" /></Svg>
    </StatusCell>
  </footer>
);

const MainWindow = () => (
  <main className="absolute top-0 right-[443px] left-0 z-20 flex h-[991px] flex-col rounded-tr-[5px] border border-l-0 border-black bg-[#b9d1ea] shadow-[inset_-1px_-1px_0_#35b8d8]">
    <div className="flex h-[31px] items-center gap-[5px] rounded-tr-[5px] border-y border-white bg-linear-to-b from-[#9ab4d3] to-[#b8d2ec] pt-[5px] pr-[9px] pl-[6px] font-['Open_Sans',sans-serif]">
      <HandshakeIcon className="size-[15px]" />
      <span className="flex-1 text-[12px] leading-4">Angebots- / Auftragsverwaltung</span>
      <div className="flex gap-[2px]">
        <button aria-label="Minimieren" className="flex h-[18px] w-8 items-center justify-center rounded-[2px] border border-[#4f6b8f] bg-linear-to-b from-[#c3d6ea] to-[#8fb0d1]">
          <i className="mt-1 h-1 w-[11px] border border-[#444] bg-white" />
        </button>
        <button aria-label="Maximieren" className="flex h-[18px] w-8 items-center justify-center rounded-[2px] border border-[#4f6b8f] bg-linear-to-b from-[#c3d6ea] to-[#8fb0d1]">
          <i className="size-[10px] border border-[#444] bg-white p-[2px]"><i className="block size-full border border-[#444]" /></i>
        </button>
        <button aria-label="Schließen" className="flex h-[18px] w-8 items-center justify-center rounded-[2px] border border-[#54141a] bg-linear-to-b from-[#e39a8f] from-45% via-[#c03c25] via-50% to-[#cf5c45]">
          <Svg className="size-[11px]"><path d="M3 2l10 12M13 2L3 14" stroke="#444" strokeWidth="6" /><path d="M3 2l10 12M13 2L3 14" stroke="#fff" strokeWidth="3.500" /></Svg>
        </button>
      </div>
    </div>
    <div className="mr-2 mb-[6px] ml-1 flex min-h-0 flex-1 flex-col bg-[#f0f1f3]">
      <Toolbar />
      <HeadSection />
      <div className="flex h-[259px]">
        <div className="flex min-w-0 flex-1 flex-col">
          <ArticleSection />
          <div className="flex h-[23px] items-start bg-[#f0f0f0] pl-[2px]">
            <button aria-label="Tabelle" className="flex h-5 w-8 items-center justify-center border border-t-0 border-[#d5d5d5]"><GridIcon /></button>
            <button aria-label="Formular" className="flex h-[22px] w-[37px] items-center justify-center border border-t-0 border-[#d5d5d5] bg-white pr-[3px]"><EditIcon /></button>
          </div>
        </div>
        <DrawingPane />
      </div>
      <div className="flex h-1 items-center justify-center border-b border-[#d0d2d6] bg-[#e6e9ef]">
        <span className="w-5 border-t-2 border-dotted border-[#666]" />
      </div>
      <div role="tablist" className="flex h-[22px] border-b border-[#71737c] bg-[#f0f0f0] pl-px">
        <Tab active num="1" text="Allgemein" className="w-[105px] pl-[13px]" />
        <Tab num="3" text="Positions-Informationen" className="w-[176px] pl-[10px]" />
        <Tab num="4" text="Ab- / Zuschläge" className="w-[130px] pl-3" />
        <Tab num="5" text="Debitorendaten" className="w-[131px] pl-3" />
        <Tab num="6" text="Angebote" className="w-[97px] pl-3" />
        <Tab num="7" text="Staffelpreise" className="w-[115px] pl-3" />
        <Tab num="8" text="Eigenschaften" className="w-[123px] pl-3" />
      </div>
      <GeneralSection />
      <StatusBar />
    </div>
  </main>
);

/* ---------- windows behind ---------- */

const STOCK = [
  ['', 'Kaufteile', ''],
  ['', 'Kaufteile', ''],
  ['26.05.25', 'Rohmaterialien', 'AG nicht vorhanden'],
  ['', 'Kaufteile', ''],
  ['26.05.25', 'Rohmaterialien', ''],
  ['', 'Rohmaterialien', ''],
  ['', 'Eigene Produkte', ''],
  ['', 'Eigene Produkte', 'AG nicht vorhanden'],
  ['26.05.25', 'Eigene Produkte', ''],
  ['26.05.25', 'Eigene Produkte', ''],
  ['', 'Kaufteile', ''],
];

const StockWindow = () => (
  <section className="absolute top-[5px] right-[5px] h-[345px] w-[475px] text-[11px]">
    <div className="flex h-6 items-center justify-end border-b border-[#ccc] bg-white pr-[5px]"><WindowIcon className="size-[14px]" /></div>
    <div className="mt-1 mr-[2px] flex h-[320px] flex-col bg-[#eef3fa] pt-2 pr-[6px]">
      <div className="flex h-[21px] items-center justify-end gap-1 border border-[#8d929b] bg-[#c8d4e2] pr-[3px]">
        <span className="pr-[2px] text-[#a9b0ba]">10:08:44</span>
        <RefreshIcon />
        <DishIcon />
        <BoxIcon />
        <ExportIcon />
        <WindowIcon />
      </div>
      <div className="mt-px h-[23px] border-t border-[#8d929b] bg-[#c8d4e2]" />
      <div className="flex min-h-0 flex-1 border-t border-r border-[#71737c] bg-white">
        <div className="flex-1 overflow-hidden">
          <table className="w-full table-fixed border-collapse">
            <colgroup>
              <col />
              <col className="w-[150px]" />
              <col className="w-[100px]" />
              <col className="w-[120px]" />
            </colgroup>
            <thead className="text-left">
              <tr className="h-[21px]">
                <th className="border-r border-[#ddd]" />
                <th colSpan={3} className="pl-[62px] text-center font-normal">Sonstiges</th>
              </tr>
              <tr className="h-[21px] whitespace-nowrap [&>th]:border-r [&>th]:border-[#ddd] [&>th]:pl-[3px] [&>th]:font-normal">
                <th className="pr-px text-right">Datum Bes</th>
                <th>Bezeichnung</th>
                <th>Organisat. Aufgabe</th>
                <th>Aufträge (gebundene B</th>
              </tr>
            </thead>
            <tbody>
              {STOCK.map(([day, kind, task], i) => (
                <tr key={i} className="h-5 border-b border-[#d6d6d6] even:bg-[#efefef] [&>td]:border-r [&>td]:border-[#ddd] [&>td]:py-0 [&>td]:pl-[3px]">
                  <td className="pr-[9px] text-right">{day}</td>
                  <td>{kind}</td>
                  <td className="whitespace-nowrap text-[10px]">{task}</td>
                  <td />
                </tr>
              ))}
            </tbody>
          </table>
        </div>
        <div className="flex w-[17px] flex-col items-center bg-[#f0f0f0] pt-1 pr-px">
          <ChevronUp size={12} strokeWidth={3} className="text-[#555]" />
          <div className="mt-px h-[68px] w-[15px] shrink-0 bg-[#cdcdcd]" />
        </div>
      </div>
    </div>
  </section>
);

const MATERIAL = [
  ['1', '1.2210 Ø14X10...', 'bg-[#efefef]'],
  ['2', '1.2210 Ø14X1000', 'bg-[#ffffe1]'],
];

const PlanWindow = () => (
  <section className="absolute top-[342px] right-0 left-[1081px] flex h-[724px] flex-col overflow-hidden border-b-2 border-l-2 border-[#4c505f] bg-[#d9e5f2]">
    <div className="h-8 shrink-0 border-t border-b border-t-[#555] border-b-white bg-linear-to-b from-[#bccad9] to-[#d4e1ee]" />
    <div className="h-[26px] shrink-0 border-b-2 border-[#7d7e86] bg-[#5a5c6d]" />
    <div className="mb-[7px] flex min-h-0 flex-1">
      <div className="ml-[6px] flex w-[789px] shrink-0 flex-col justify-end border-r border-[#71737c] bg-white">
        <div role="tablist" className="flex h-[19px] border-b border-[#71737c]">
          <Tab num="1" text="Sonstiges" className="w-[102px] bg-[#f0f0f0] pl-[13px]" />
          <Tab active num="2" text="Zuschnitt" className="w-[102px] pl-[9px]" icon={<TickIcon className="size-[14px]" />} />
        </div>
        <div className="flex h-[52px] bg-[#f0f1f3]">
          <Captions
            className="pt-[11px]"
            items={[
              { text: 'Pos | TeileNr Zeichnung', to: 'teil' },
              { text: 'Anzahl Zuschnitte', to: 'anz', space: 'mt-px' },
            ]}
          />
          <div className="flex flex-col gap-[3px] pt-[11px] pl-[13px]">
            <Row>
              <Field id="teil" name="Pos" className="w-[75px]" value="1" right />
              <Field name="TeileNr" className="ml-4 w-[169px]" value="Z-01" />
              <Btn className="ml-[2px] h-[22px] w-[200px]"><SheetsIcon />Zuschnitt hinzufügen</Btn>
            </Row>
            <Row><Field id="anz" name="Anzahl Zuschnitte" className="w-[75px]" value="2,00" right /></Row>
          </div>
        </div>
      </div>
      <div className="flex min-w-0 flex-1 flex-col bg-white text-[12px]">
        <div className="flex h-[158px] shrink-0 flex-col gap-[2px] border-b border-[#71737c] bg-[#f0f1f3] pt-3">
          <Row>
            <Field name="Variante" className="w-[50px] [&>input]:pl-[14px]" value="1" dots />
            <span className="mr-[2px] ml-[2px] flex h-[19px] w-10 items-center justify-around bg-[#b3b3fb] text-[#2c6fb8]">
              <button aria-label="Vorige Variante" className="rotate-180"><PlayMark className="size-[10px]" /></button>
              <button aria-label="Nächste Variante"><PlayMark className="size-[10px]" /></button>
            </span>
            <CheckBox on bold className="w-[172px]">Fertigungsvar.</CheckBox>
            <CheckBox on bold>Kalkulationsvar.</CheckBox>
          </Row>
          <Row><Field name="Bezeichnung" className="w-[269px]" dots /></Row>
          <Row>
            <Field name="Nummer" className="w-[79px]" tone="off" value="1108" right />
            <CheckBox on off className="ml-[15px]">Prüf- / Regelkarte</CheckBox>
          </Row>
          <Row>
            <Field name="Kennung" className="w-[50px]" dots />
            <CheckBox off className="ml-[44px] w-[250px]">Freigabe QS (Prüf- / Regelkarte)</CheckBox>
            <CheckBox off>Copy Exact</CheckBox>
          </Row>
          <Row>
            <Field id="stk" name="Menge" className="w-[79px]" value="20" right />
            <label htmlFor="stk" className="pl-[6px]">Stück</label>
          </Row>
          <Row className="pt-1 pl-[11px]">Anzahl:1</Row>
        </div>
        <div role="tablist" className="mt-[2px] flex h-[21px] shrink-0 border-b border-[#999] bg-[#f0f0f0]">
          <Tab num="8" text="Prüfplan" className="w-[99px] pl-[19px]" />
          <Tab num="9" text="Auftragsbegleitende Artikel/Normen" className="w-[238px] pl-3" />
          <Tab num="10" text="Sonstiges" className="w-[107px] pl-3" />
        </div>
        <div className="flex h-[22px] shrink-0 items-center gap-[2px] border-b border-[#888] bg-[#ebe8d9]">
          <ToolBtn name="Spalten" className="ml-1 size-5"><GridIcon /></ToolBtn>
          <ToolBtn name="Breite" className="size-5"><Svg><path d="M0 4l4 4-4 4zM16 4l-4 4 4 4z" fill="#2c7ac2" /><path d="M5.500 1.500h5v13h-5z" fill="#fff" stroke="#555" /></Svg></ToolBtn>
          <ToolBtn name="Filter löschen" className="size-5"><Svg><path d="M2 3h13l-5 6-1 6-2-2V8z" fill="#9a9a9a" stroke="#444" /><path d="M1 9l5 6M6 9l-5 6" stroke="#e0301b" strokeWidth="2.500" /></Svg></ToolBtn>
          <ToolBtn name="Suchen" className="size-5"><Svg><path d="M1 6l4-3 5 5M6 3l5-1 4 6" stroke="#666" strokeWidth="2.500" /><circle cx="8" cy="10" r="2.600" fill="#cfe2f5" stroke="#567" /><circle cx="13" cy="9" r="2.600" fill="#cfe2f5" stroke="#567" /></Svg></ToolBtn>
        </div>
        <table className="w-[531px] table-fixed border-collapse whitespace-nowrap">
          <colgroup>
            <col className="w-[51px]" />
            <col className="w-[120px]" />
            <col className="w-[120px]" />
            <col className="w-[120px]" />
            <col className="w-[120px]" />
          </colgroup>
          <thead className="text-left [&_th]:font-normal">
            <tr className="h-[22px]">
              <th colSpan={5} className="pl-[142px] text-center">Artikel</th>
            </tr>
            <tr className="h-[22px] [&>th]:overflow-hidden [&>th]:border-r [&>th]:border-[#ddd] [&>th]:pl-[3px]">
              <th className="indent-3">Pos.</th>
              <th>Dimension</th>
              <th><PlayMark className="mr-[6px] ml-[3px] inline size-[9px] text-[#1c7fe0]" />Artikel-Nr. (Materia</th>
              <th>Artikelbezeichnung</th>
              <th>Material</th>
            </tr>
          </thead>
          <tbody>
            {MATERIAL.map(([pos, nr, tint]) => (
              <tr key={pos} className="h-[21px] border-b border-[#d6d6d6] [&>td]:border-r [&>td]:border-[#ddd] [&>td]:py-0 [&>td]:pl-[3px]">
                <td className={clsx('pr-[2px] text-right', pos === '2' && 'bg-[#efefef]')}>{pos}</td>
                <td className={clsx('text-[11px]', tint)}>Ø 14x1000</td>
                <td className="bg-[#efefef] pr-[2px]">
                  <span className="flex items-center justify-between">
                    <a href="#material" className="underline">{nr}</a>
                    {pos === '1' && <button aria-label="Material wählen" className="h-4 w-[15px] border border-[#aaa] bg-[#dcdcdc] text-[8px] leading-[8px]">···</button>}
                  </span>
                </td>
                <td className={clsx('text-[11px]', tint)}>Silberstahl Rundstang...</td>
                <td className={clsx('text-[11px]', tint)}>115CrV3</td>
              </tr>
            ))}
          </tbody>
        </table>
      </div>
    </div>
  </section>
);

/* ---------- shell ---------- */

const Rail = () => (
  <nav className="relative z-30 flex w-[26px] shrink-0 flex-col justify-between bg-[#bebfcf] pt-[31px] pb-[3px]">
    <div className="flex h-[249px] flex-col items-start gap-[6px] border border-black bg-[#ececec] pt-[3px] pl-[3px]">
      <button aria-label="Beenden"><DoorIcon /></button>
      <button aria-label="Konstruktion"><DraftIcon /></button>
      <button aria-label="Einstellungen"><GearIcon /></button>
      <button aria-label="Masken"><FormsIcon /></button>
      <button aria-label="Notiz"><NoteIcon /></button>
      <button aria-label="Druck"><BoxIcon /></button>
      <button aria-label="Übernehmen"><TickIcon /></button>
      <button aria-label="Abbrechen"><CrossIcon /></button>
    </div>
    <div className="absolute top-[872px] left-0 h-[190px] w-[6px] overflow-hidden rounded-r-[4px] border border-l-0 border-black bg-[#005a8e] pt-[90px]">
      <div className="h-px w-[2px] bg-white shadow-[0_4px_#fff,0_8px_#fff]" />
    </div>
    <div className="flex flex-col items-center gap-[2px]">
      <ToolBtn name="Aufträge" className="h-[21px] w-[22px]"><HandshakeIcon className="size-[18px]" /></ToolBtn>
      <ToolBtn name="Zeichnungen" className="h-[21px] w-[22px]"><DraftIcon className="size-[18px]" /></ToolBtn>
      <ToolBtn name="Teile" className="h-[21px] w-[22px]"><SolidsIcon className="size-[18px]" /></ToolBtn>
      <hr className="my-1 w-5 border-t-2 border-white" />
      <ToolBtn name="Liste" className="h-[21px] w-[22px]"><Svg><path d="M3 1h10v14H3z" fill="#fff" stroke="#777" /><path d="M5 4h6M5 6h6M5 8h6" stroke="#7aa7d4" /><path d="M5 10h6v3H5z" fill="#3f7cbc" /></Svg></ToolBtn>
      <ToolBtn name="Stopp" className="h-[21px] w-[22px]"><Svg><circle cx="8" cy="8" r="6.500" fill="#ff3a14" stroke="#b31d00" /><path d="M4 5h8M4 8h8M5 11h6" stroke="#ff9d80" strokeWidth="1.500" /></Svg></ToolBtn>
    </div>
  </nav>
);

const Desktop = () => (
  <div className="relative min-w-0 flex-1 overflow-hidden bg-[#6b6f85]">
    <div className="absolute inset-y-0 left-0 w-[550px] bg-[#454857]" />
    <section className="absolute top-[900px] bottom-0 left-px w-[499px] border-r border-l border-[#555] bg-[#d9e5f2] px-[6px] pb-[3px]">
      <svg viewBox="0 0 484 444" preserveAspectRatio="none" className="size-full border border-[#8a929b] bg-[#f9ffff]">
        <path d="M0 354h484v90H21L2 362z" fill="#edf4fd" />
        <path d="M440 88c25 30 36 70 44 110V88z" fill="#edf4fd" />
      </svg>
    </section>
    <StockWindow />
    <PlanWindow />
    <MainWindow />
    <div className="absolute right-[46px] bottom-[29px] flex items-center gap-[5px] text-[#e9eaf0]">
      <Svg className="h-5 w-[25px]" box="0 0 25 20">
        <path d="M1.500 1.500h22v17h-22z" stroke="currentColor" strokeWidth="2" />
        <path d="M2 2h6l5 8-5 8H2l4-8z" fill="currentColor" />
        <path d="M11 2h12v3h-6l4 5-4 5h6v3H11l5-8z" fill="currentColor" />
      </Svg>
      <span className="font-[Inter,sans-serif] text-[29px] leading-7 font-bold">PRODAT</span>
    </div>
  </div>
);

const Taskbar = () => (
  <footer className="flex h-10 shrink-0 items-center bg-[#101010] font-['Open_Sans',sans-serif] text-[11px] text-white">
    <span className="h-4 w-[2px] bg-[#f7d978]" />
    <button aria-label="Firefox" className="ml-[18px] flex h-full w-10 flex-col items-center justify-end">
      <Svg className="mb-[6px] size-6" box="0 0 24 24">
        <circle cx="12" cy="13" r="10.500" fill="#ff5a2e" />
        <path d="M14 0c5 3 9 7 9 13a11 11 0 0 1-11 11C6 24 2 20 1 14c3 5 8 6 12 4 5-3 4-8 1-11-1-2-1-5 0-7z" fill="#ffb62b" />
        <path d="M2 15a11 11 0 0 0 20 2c-3 8-17 9-20-2z" fill="#f5206d" />
        <circle cx="12" cy="13" r="5" fill="#7a3fd0" />
        <path d="M4 4l4 3 4 0-4 4c-2 3 1 5 5 4-4 4-11 1-10-5z" fill="#ff9330" />
      </Svg>
      <i className="h-[2px] w-full bg-[#76b9ed]" />
    </button>
    <button aria-label="Outlook" className="ml-[17px] flex h-full items-center">
      <Svg className="size-6" box="0 0 24 24">
        <path d="M0 3l14-3v24L0 21z" fill="#0a6fc2" />
        <path d="M14 6h10v13H14z" fill="#fff" />
        <path d="M14 9l4 4 6-6" stroke="#0a6fc2" strokeWidth="1.500" />
        <ellipse cx="7" cy="12" rx="3" ry="4" stroke="#fff" strokeWidth="2" />
      </Svg>
    </button>
    <button aria-label="PRODAT" className="ml-[13px] flex h-full w-12 flex-col items-center justify-end bg-[#333]">
      <ProdatMark className="mb-[8px] size-[22px]" />
      <i className="h-[2px] w-full bg-[#76b9ed]" />
    </button>
    <div className="ml-auto flex h-full items-center">
      <span className="mr-2 h-4 border-l border-[#555]" />
      <span>Desktop</span>
      <span className="mb-4 ml-2 text-[14px]">»</span>
      <ChevronUp size={15} className="ml-[11px]" />
      <Svg className="mx-2 size-[17px]" box="0 0 18 18"><path d="M5 3h12v9H5zM2 6v9M8 15h6M11 12v3M1 4h3v4H1z" stroke="#fff" strokeWidth="1.200" /></Svg>
      <span className="text-[12px]">DEU</span>
      <div className="w-[78px] text-center leading-[17px]">
        <div>10:11</div>
        <div>05.01.2026</div>
      </div>
      <Svg className="mr-6 ml-[6px] size-[17px]" box="0 0 18 18"><path d="M1 1h16v12h-5v4l-4-4H1z" fill="#fff" /><path d="M4 4.500h10M4 7h10M4 9.500h10" stroke="#101010" /></Svg>
    </div>
  </footer>
);

export default function App() {
  return (
    <div className="flex h-screen w-full flex-col overflow-hidden bg-[#6b6f85] font-['Liberation_Sans',Arial,sans-serif] text-black">
      <header className="relative shrink-0 font-['Open_Sans',sans-serif]">
        <div className="grid h-[27px] grid-cols-[1fr_auto_1fr] items-center bg-white">
          <div className="flex items-center gap-[2px] pl-[51px]">
            <button aria-label="Einkauf"><CartIcon /></button>
            <button aria-label="Adressen"><BookIcon /></button>
            <button aria-label="Teile"><SolidsIcon className="size-[22px]" /></button>
            <button aria-label="Lager"><RackIcon /></button>
            <Svg className="ml-1 h-2 w-[6px]" box="0 0 6 8"><path d="M0 1h6M1 4h4L3 7z" stroke="#aaa" fill="#aaa" /></Svg>
          </div>
          <span className="text-[12px] leading-4 whitespace-pre">PRODAT ERP   [STA Angrick, Steffen @localhost:PRODAT-DEV-24]</span>
          <div className="flex items-center justify-end gap-[33px] pr-[18px]">
            <button aria-label="Minimieren"><Minus size={13} strokeWidth={2} /></button>
            <button aria-label="Wiederherstellen"><Svg className="size-[11px]" box="0 0 11 11"><path d="M.5 3h7.500v7.500H.5zM3 3V.5h7.500V8H8" stroke="#000" /></Svg></button>
            <button aria-label="Schließen"><X size={15} strokeWidth={1.5} /></button>
          </div>
        </div>
        <nav className="flex h-[27px] items-center gap-6 border-b border-[#9293a0] bg-[#484957] pt-[3px] pl-[62px] text-[12px] leading-4 text-[#d3d4dc]">
          <a href="#anwendung">Anwendung</a>
          <a href="#system">Systemprogramme</a>
          <a href="#stamm">Stammdaten</a>
        </nav>
        <button aria-label="PRODAT Menü" className="absolute top-[3px] left-[6px] z-40 flex size-[37px] items-center justify-center rounded-full border-2 border-[#4a4d5c] bg-linear-to-b from-[#e5e6ee] to-[#a9abbd]">
          <ProdatMark className="size-[22px]" />
        </button>
      </header>
      <div className="flex min-h-0 flex-1">
        <Rail />
        <Desktop />
      </div>
      <Taskbar />
    </div>
  );
}
